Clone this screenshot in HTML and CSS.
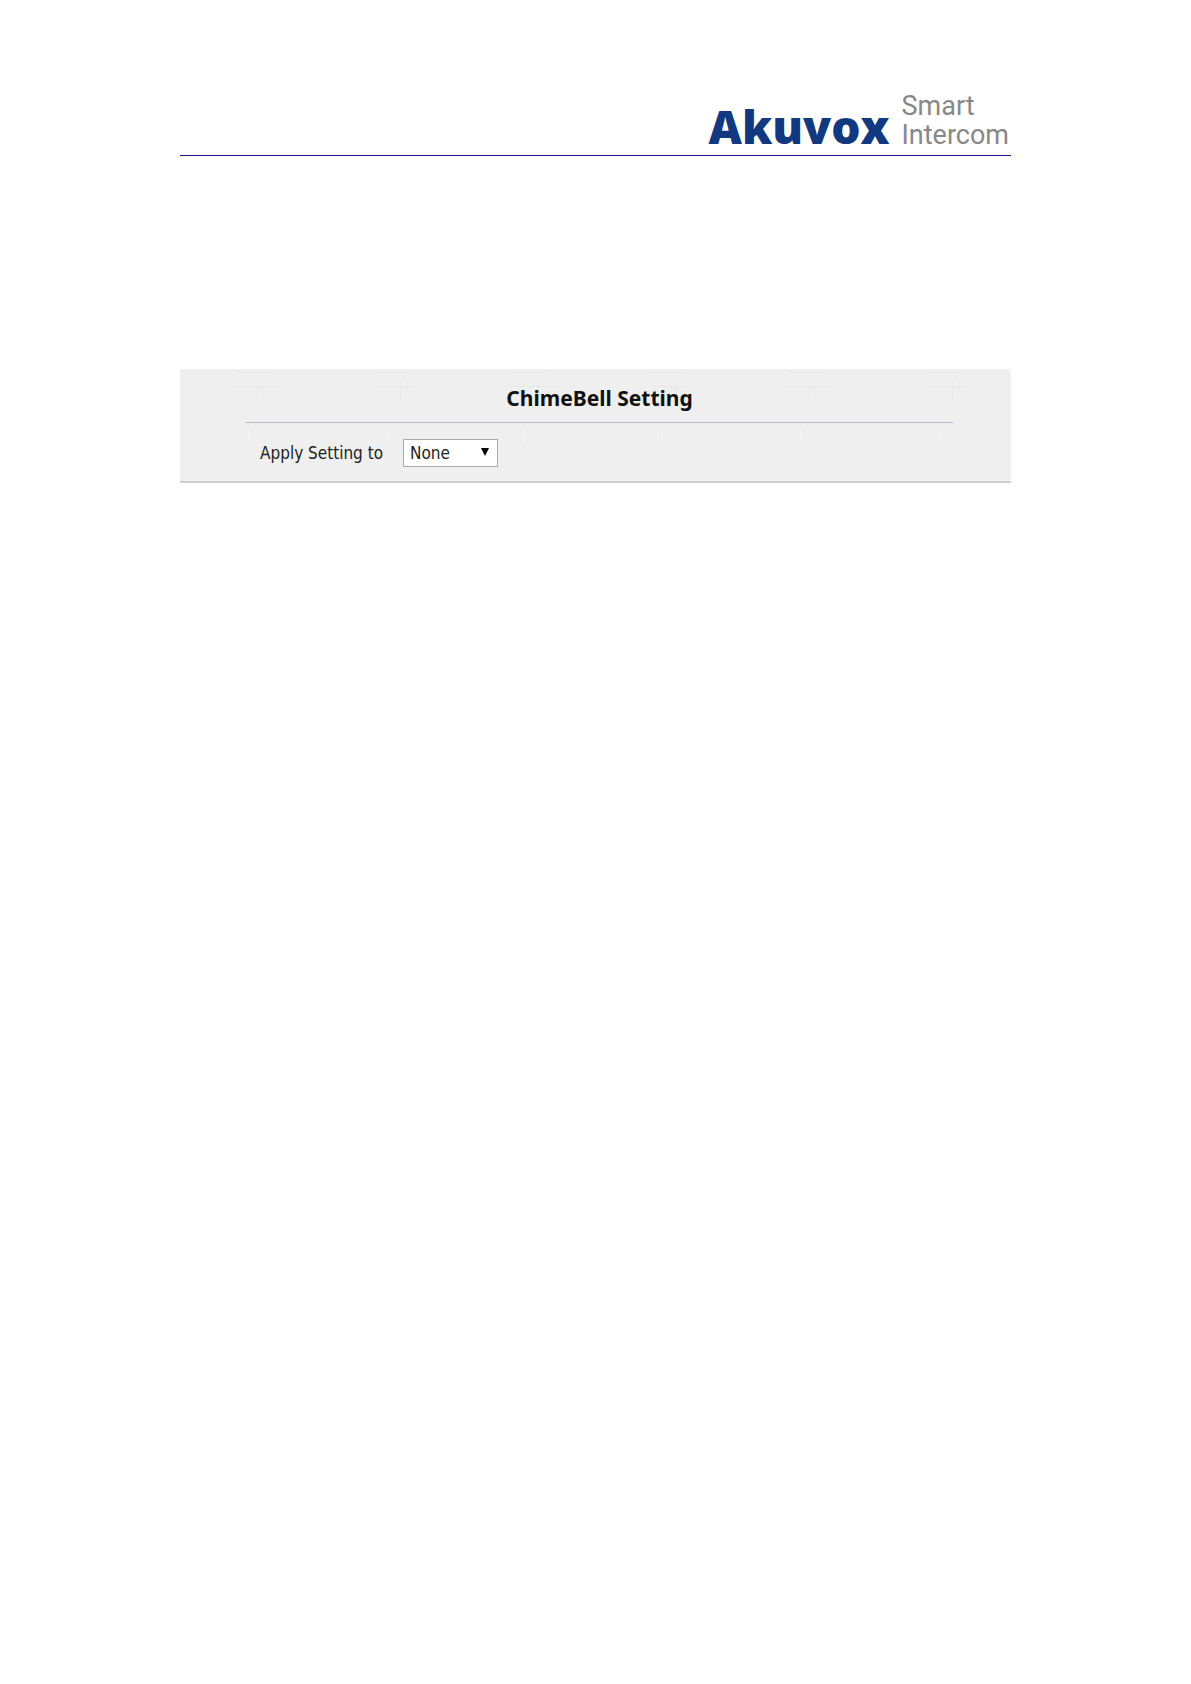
FILE: index.html
```
<!DOCTYPE html>
<html lang="en">
<head>
    <meta charset="UTF-8">
    <meta name="viewport" content="width=device-width, initial-scale=1.0">
    <title>ChimeBell Setting</title>
    <link rel="stylesheet" href="styles.css">
</head>
<body>

<header class="page-header">
    <div class="brand">Akuvox</div>
    <div class="tagline">Smart<br>Intercom</div>
</header>

<main>
    <section class="panel">
        <h1>ChimeBell Setting</h1>
        <div class="field">
            <label for="apply">Apply Setting to</label>
            <div class="select-box">
                <select id="apply" name="apply">
                    <option>None</option>
                </select>
                <svg class="arrow" viewBox="0 0 8 8" aria-hidden="true"><path d="M0 0h8L4 8z"/></svg>
            </div>
        </div>
    </section>
</main>

</body>
</html>
```
FILE: styles.css
```
body {
    margin: 0;
    padding: 92px 180px;
    background-color: #fff;
    font-family: "DejaVu Sans Condensed", Tahoma, sans-serif;
    color: #222;
}
.page-header {
    display: flex;
    justify-content: flex-end;
    align-items: last baseline;
    gap: 12px;
    padding-bottom: 5px;
    border-bottom: 1px solid #1a1090;
}
.brand {
    font-family: "Open Sans", sans-serif;
    font-size: 46px;
    font-weight: 800;
    line-height: 48px;
    color: #12387f;
}
.tagline {
    font-family: Roboto, sans-serif;
    font-size: 27px;
    font-weight: 400;
    line-height: 29px;
    padding-right: 2px;
    color: #888;
}
.panel {
    margin-top: 213px;
    padding: 16px 58px 14px 66px;
    border-bottom: 2px solid #cfcfcf;
    background-color: #efefef;
    /* faint linen threads */
    background-image:
        linear-gradient(90deg, transparent 57px, #e8e8e8 57px, #e8e8e8 90px, transparent 90px),
        linear-gradient(90deg, transparent 57px, #e8e8e8 57px, #e8e8e8 100px, transparent 100px),
        linear-gradient(90deg, transparent 82px, #e9e9e9 82px, #e9e9e9 83px, transparent 83px),
        linear-gradient(90deg, transparent 68px, #f5f5f5 68px, #f5f5f5 69px, transparent 69px);
    background-size: 138px 1px, 138px 1px, 138px 20px, 138px 16px;
    background-position: 0 3px, 0 17px, 0 10px, 0 60px;
    background-repeat: repeat-x;
}
.panel h1 {
    margin: 0;
    padding-bottom: 11px;
    border-bottom: 1px solid #b4bccb;
    font-family: "Noto Sans", sans-serif;
    font-size: 21px;
    font-weight: 700;
    line-height: 26px;
    text-align: center;
    color: #111;
}
.field {
    display: flex;
    align-items: center;
    gap: 20px;
    padding: 16px 14px 0;
    font-size: 17px;
}
.select-box {
    position: relative;
}
.select-box select {
    appearance: none;
    display: block;
    width: 95px;
    height: 28px;
    padding: 0 24px 0 6px;
    border: 1px solid #aaa;
    border-radius: 0;
    background-color: #fff;
    font: inherit;
    color: #222;
}
.arrow {
    position: absolute;
    top: 9px;
    right: 9px;
    width: 8px;
    height: 8px;
    fill: #000;
    pointer-events: none;
}
```
